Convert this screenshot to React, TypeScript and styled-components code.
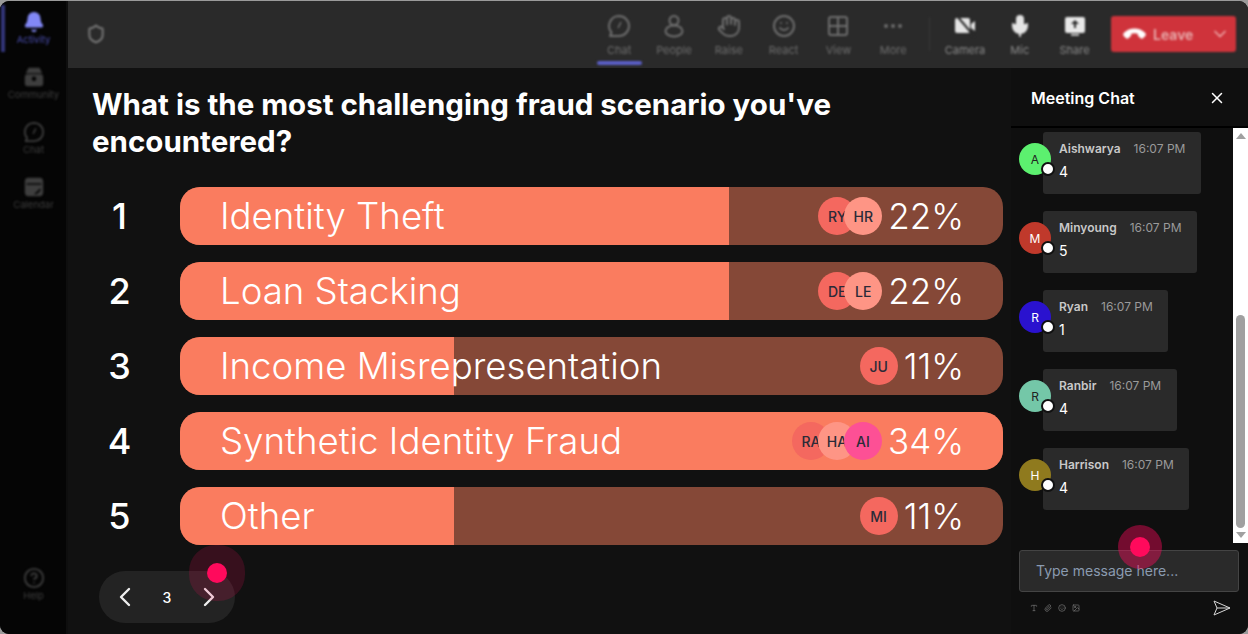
import styled, { createGlobalStyle } from "styled-components";
import {
  Shield,
  Hand,
  Smile,
  Grid2x2,
  Ellipsis,
  Mic,
  Phone,
  ChevronDown,
  ChevronLeft,
  ChevronRight,
  Bell,
  CircleHelp,
  X,
  Type,
  Paperclip,
  Image,
} from "lucide-react";

const GlobalStyle = createGlobalStyle`
  html, body {
    margin: 0;
    padding: 0;
    background: #9a9a9a;
  }
  * {
    box-sizing: border-box;
  }
`;

const BubbleIcon = ({ size }: { size: number }) => (
  <svg width={size} height={size} viewBox="0 0 24 24" fill="none" stroke="currentColor" strokeWidth="2">
    <path d="M12 2a10 10 0 0 1 0 20H3l1.5-3.5A10 10 0 0 1 12 2Z" strokeLinejoin="round" />
    <path d="M14 8l-3 6" strokeWidth="1.5" />
  </svg>
);

const CommunityIcon = () => (
  <svg width="22" height="22" viewBox="0 0 24 24" fill="currentColor">
    <path d="M6 2h12l3 6H3Z" />
    <rect x="2" y="9" width="20" height="13" rx="3" />
    <circle cx="12" cy="14" r="2.5" fill="#050505" />
  </svg>
);

const CalendarIcon = () => (
  <svg width="22" height="22" viewBox="0 0 24 24" fill="currentColor">
    <rect x="2" y="2" width="20" height="20" rx="4" />
    <rect x="4" y="8" width="16" height="1.6" fill="#050505" />
    <path d="M12 20l7-7v3l-4 4Z" fill="#050505" />
  </svg>
);

const PersonIcon = () => (
  <svg width="24" height="24" viewBox="0 0 24 24" fill="none" stroke="currentColor" strokeWidth="2">
    <circle cx="12" cy="6.5" r="4.5" />
    <ellipse cx="12" cy="17" rx="8.5" ry="5.5" />
  </svg>
);

const CameraIcon = () => (
  <svg width="24" height="24" viewBox="0 0 24 24" fill="#e4e4e4">
    <rect x="2" y="4" width="15" height="15" rx="2" />
    <path d="M18 10l4-3v10l-4-3Z" />
    <path d="M4 2l17 20" stroke="#2a2a2a" strokeWidth="2" />
  </svg>
);

const ShareIcon = () => (
  <svg width="24" height="24" viewBox="0 0 24 24" fill="#e8e8e8">
    <rect x="2" y="3" width="20" height="16" rx="2" />
    <path d="M12 6l4 4h-3v4h-2v-4H8Z" fill="#2a2a2a" />
    <rect x="8" y="20" width="8" height="1.6" />
  </svg>
);

const SendIcon = () => (
  <svg width="18" height="16" viewBox="0 0 18 16" fill="none" stroke="#d8d8d8" strokeWidth="1">
    <path d="M1 1l16 7-16 7 3-7Z" strokeLinejoin="round" />
    <path d="M4 8h13" />
  </svg>
);

const railItems = [
  { label: "Activity", icon: <Bell size={22} fill="#8288f5" color="#8288f5" />, active: true },
  { label: "Community", icon: <CommunityIcon /> },
  { label: "Chat", icon: <BubbleIcon size={22} /> },
  { label: "Calendar", icon: <CalendarIcon /> },
];

const tools = [
  { label: "Chat", icon: <BubbleIcon size={24} />, active: true },
  { label: "People", icon: <PersonIcon /> },
  { label: "Raise", icon: <Hand size={24} strokeWidth={2} /> },
  { label: "React", icon: <Smile size={24} strokeWidth={2} /> },
  { label: "View", icon: <Grid2x2 size={24} strokeWidth={2} /> },
  { label: "More", icon: <Ellipsis size={24} strokeWidth={2} /> },
];

const mediaTools = [
  { label: "Camera", icon: <CameraIcon /> },
  { label: "Mic", icon: <Mic size={24} fill="#e4e4e4" color="#e4e4e4" /> },
  { label: "Share", icon: <ShareIcon /> },
];

const pollOptions = [
  { rank: 1, label: "Identity Theft", fill: 66.7, percent: "22%", voters: ["RY", "HR"] },
  { rank: 2, label: "Loan Stacking", fill: 66.7, percent: "22%", voters: ["DE", "LE"] },
  { rank: 3, label: "Income Misrepresentation", fill: 33.3, percent: "11%", voters: ["JU"] },
  { rank: 4, label: "Synthetic Identity Fraud", fill: 100, percent: "34%", voters: ["RA", "HA", "AI"] },
  { rank: 5, label: "Other", fill: 33.3, percent: "11%", voters: ["MI"] },
];

const voterColors = ["#f4685f", "#fe9585", "#fd5095"];

const messages = [
  { name: "Aishwarya", text: "4", color: "#5cf06f", textColor: "#222", width: 158 },
  { name: "Minyoung", text: "5", color: "#c0392b", textColor: "#fff", width: 154 },
  { name: "Ryan", text: "1", color: "#2a12cf", textColor: "#fff", width: 125 },
  { name: "Ranbir", text: "4", color: "#74c7a8", textColor: "#222", width: 134 },
  { name: "Harrison", text: "4", color: "#8f7a1e", textColor: "#fff", width: 146 },
];

export default function App() {
  return (
    <>
      <GlobalStyle />
      <Frame>
        <Rail>
          <RailTop>
            {railItems.map((item) => (
              <RailItem key={item.label} $active={item.active}>
                {item.icon}
                <span>{item.label}</span>
              </RailItem>
            ))}
          </RailTop>
          <RailItem>
            <CircleHelp size={22} />
            <span>Help</span>
          </RailItem>
        </Rail>

        <Workspace>
          <Header>
            <ShieldIcon>
              <Shield size={20} strokeWidth={2.4} />
            </ShieldIcon>
            <Toolbar>
              {tools.map((tool) => (
                <Tool key={tool.label} $active={tool.active}>
                  {tool.icon}
                  <span>{tool.label}</span>
                </Tool>
              ))}
              <Divider />
              {mediaTools.map((tool) => (
                <MediaTool key={tool.label}>
                  {tool.icon}
                  <span>{tool.label}</span>
                </MediaTool>
              ))}
              <LeaveButton>
                <HangUp>
                  <Phone size={19} fill="#fff" color="#fff" />
                </HangUp>
                <LeaveLabel>Leave</LeaveLabel>
                <ChevronDown size={20} color="#eaa" />
              </LeaveButton>
            </Toolbar>
          </Header>

          <Body>
            <PollArea>
              <Question>
                What is the most challenging fraud scenario you've encountered?
              </Question>
              <OptionList>
                {pollOptions.map((option) => (
                  <OptionRow key={option.rank}>
                    <Rank>{option.rank}</Rank>
                    <Bar>
                      <BarFill style={{ width: `${option.fill}%` }} />
                      <BarLabel>{option.label}</BarLabel>
                      <BarResult>
                        <Voters>
                          {option.voters.map((voter, i) => (
                            <Voter key={voter} $color={voterColors[i]}>
                              {voter}
                            </Voter>
                          ))}
                        </Voters>
                        <Percent>{option.percent}</Percent>
                      </BarResult>
                    </Bar>
                  </OptionRow>
                ))}
              </OptionList>
              <Pager>
                <ChevronLeft size={32} color="#eee" strokeWidth={1.8} />
                <PageNumber>3</PageNumber>
                <ChevronRight size={32} color="#eee" strokeWidth={1.8} />
              </Pager>
              <PointerDot $x={139} $y={495} $halo={28} $alpha={0.16} />
            </PollArea>

            <ChatPanel>
              <ChatHeader>
                <ChatTitle>Meeting Chat</ChatTitle>
                <X size={18} color="#fff" />
              </ChatHeader>
              <ChatScroll>
                <MessageList>
                  {messages.map((message) => (
                    <MessageRow key={message.name}>
                      <Avatar $color={message.color} $textColor={message.textColor}>
                        {message.name[0]}
                        <StatusDot />
                      </Avatar>
                      <MessageCard style={{ width: message.width }}>
                        <MessageMeta>
                          <SenderName>{message.name}</SenderName>
                          <SentAt>16:07 PM</SentAt>
                        </MessageMeta>
                        <MessageText>{message.text}</MessageText>
                      </MessageCard>
                    </MessageRow>
                  ))}
                </MessageList>
                <Scrollbar>
                  <ArrowUp />
                  <ThumbTrack>
                    <Thumb />
                  </ThumbTrack>
                  <ArrowDown />
                </Scrollbar>
              </ChatScroll>
              <Composer>
                <MessageInput>Type message here...</MessageInput>
                <ComposerTools>
                  <FormatIcons>
                    <Type size={8} />
                    <Paperclip size={8} />
                    <Smile size={8} />
                    <Image size={8} />
                  </FormatIcons>
                  <SendIcon />
                </ComposerTools>
              </Composer>
              <PointerDot $x={119} $y={469} $halo={22} $alpha={0.42} />
            </ChatPanel>
          </Body>
        </Workspace>
      </Frame>
    </>
  );
}

const Frame = styled.div`
  display: flex;
  width: 1248px;
  height: 633px;
  margin-top: 1px;
  background: #0e0e0e;
  border-radius: 9px;
  overflow: hidden;
  font-family: Inter, "Liberation Sans", sans-serif;
`;

const Rail = styled.aside`
  flex: 0 0 66px;
  display: flex;
  flex-direction: column;
  justify-content: space-between;
  padding: 10px 0 12px 1px;
  background: #050505;
  color: #3e3e3e;
`;

const RailTop = styled.div`
  display: flex;
  flex-direction: column;
`;

const RailItem = styled.div<{ $active?: boolean }>`
  position: relative;
  display: flex;
  flex-direction: column;
  align-items: center;
  height: 55px;
  gap: 1px;
  font-size: 9.5px;
  color: ${(p) => (p.$active ? "#4a4eb0" : "#3e3e3e")};
  filter: blur(1.3px);

  &::before {
    content: "";
    display: ${(p) => (p.$active ? "block" : "none")};
    position: absolute;
    left: 0;
    top: -6px;
    width: 4px;
    height: 47px;
    background: #33367a;
  }
`;

const Workspace = styled.div`
  flex: 1;
  min-width: 0;
  display: flex;
  flex-direction: column;
  margin-left: 2px;
`;

const Header = styled.header`
  flex: 0 0 67px;
  display: flex;
  align-items: flex-start;
  justify-content: space-between;
  padding: 0 12px 0 18px;
  background: #2a2a2a;
`;

const ShieldIcon = styled.div`
  margin-top: 23px;
  color: #777;
  filter: blur(0.8px);
`;

const Toolbar = styled.div`
  display: flex;
  align-items: flex-start;
`;

const Tool = styled.div<{ $active?: boolean }>`
  position: relative;
  display: flex;
  flex-direction: column;
  align-items: center;
  width: 54.8px;
  padding-top: 13px;
  gap: 5px;
  font-size: 11px;
  color: #6e6e6e;
  filter: blur(1.3px);

  &::after {
    content: "";
    display: ${(p) => (p.$active ? "block" : "none")};
    position: absolute;
    left: 5px;
    top: 60px;
    width: 45px;
    height: 4px;
    border-radius: 2px;
    background: #5b5fc7;
  }
`;

const Divider = styled.div`
  width: 1px;
  height: 34px;
  margin: 16px 8px 0 8px;
  background: #3a3a3a;
  filter: blur(0.8px);
`;

const MediaTool = styled(Tool)`
  color: #8a8a8a;
`;

const LeaveButton = styled.div`
  display: flex;
  align-items: center;
  width: 125px;
  height: 36px;
  margin: 15px 0 0 9px;
  padding: 0 6px 0 14px;
  border-radius: 3px;
  background: #cf333b;
  color: #e8b0b0;
  filter: blur(1.2px);
`;

const HangUp = styled.span`
  display: flex;
  transform: rotate(135deg);
  margin-right: 9px;
`;

const LeaveLabel = styled.span`
  flex: 1;
  font-size: 14px;
  font-weight: 600;
`;

const Body = styled.div`
  flex: 1;
  min-height: 0;
  display: flex;
`;

const PollArea = styled.main`
  position: relative;
  flex: 1;
  min-width: 0;
  padding: 18px 8px 0 24px;
  background: #111;
`;

const Question = styled.h1`
  width: 770px;
  margin: 0 0 28px;
  font-size: 29.5px;
  font-weight: 700;
  line-height: 36.5px;
  color: #fff;
`;

const OptionList = styled.div`
  display: flex;
  flex-direction: column;
  gap: 17px;
`;

const OptionRow = styled.div`
  display: flex;
  align-items: center;
`;

const Rank = styled.div`
  flex: 0 0 88px;
  padding-right: 33px;
  text-align: center;
  font-size: 36px;
  font-weight: 500;
  color: #fff;
`;

const Bar = styled.div`
  position: relative;
  flex: 1;
  display: flex;
  align-items: center;
  justify-content: space-between;
  height: 58px;
  padding: 0 39px 0 40px;
  border-radius: 20px;
  overflow: hidden;
  background: #854837;
  color: #fff;
`;

const BarFill = styled.div`
  position: absolute;
  left: 0;
  top: 0;
  bottom: 0;
  background: #fa7c5f;
`;

const BarLabel = styled.span`
  position: relative;
  font-size: 36.6px;
  font-weight: 350;
`;

const BarResult = styled.div`
  position: relative;
  display: flex;
  align-items: center;
  gap: 6px;
`;

const Voters = styled.div`
  display: flex;
`;

const Voter = styled.div<{ $color: string }>`
  display: flex;
  align-items: center;
  justify-content: center;
  width: 38px;
  height: 38px;
  margin-left: -12px;
  border-radius: 50%;
  background: ${(p) => p.$color};
  color: #2b2b38;
  font-size: 14px;
  font-weight: 500;
`;

const Percent = styled.span`
  font-size: 35px;
  font-weight: 350;
`;

const Pager = styled.div`
  display: flex;
  align-items: center;
  justify-content: space-between;
  width: 136px;
  height: 52px;
  margin: 26px 0 0 7px;
  padding: 0 10px;
  border-radius: 26px;
  background: #232323;
`;

const PageNumber = styled.span`
  font-size: 14px;
  font-weight: 500;
  color: #fff;
`;

const PointerDot = styled.div<{ $x: number; $y: number; $halo: number; $alpha: number }>`
  position: absolute;
  left: ${(p) => p.$x}px;
  top: ${(p) => p.$y}px;
  width: 20px;
  height: 20px;
  border-radius: 50%;
  background: #ff0a5c;
  box-shadow: 0 0 0 ${(p) => p.$halo - 10}px rgba(255, 10, 92, ${(p) => p.$alpha});
`;

const ChatPanel = styled.section`
  position: relative;
  flex: 0 0 237px;
  display: flex;
  flex-direction: column;
  background: #0f0f0f;
`;

const ChatHeader = styled.div`
  flex: 0 0 60px;
  display: flex;
  align-items: center;
  justify-content: space-between;
  padding: 2px 22px 0 20px;
  border-bottom: 2px solid #000;
`;

const ChatTitle = styled.h2`
  margin: 0;
  font-size: 16px;
  font-weight: 600;
  color: #fff;
`;

const ChatScroll = styled.div`
  flex: 0 0 415px;
  display: flex;
  justify-content: space-between;
`;

const MessageList = styled.div`
  display: flex;
  flex-direction: column;
  gap: 17px;
  padding: 4px 0 0 8px;
`;

const MessageRow = styled.div`
  display: flex;
  align-items: flex-start;
`;

const Avatar = styled.div<{ $color: string; $textColor: string }>`
  position: relative;
  z-index: 1;
  flex: 0 0 32px;
  display: flex;
  align-items: center;
  justify-content: center;
  width: 32px;
  height: 32px;
  margin: 11px -8px 0 0;
  border-radius: 50%;
  background: ${(p) => p.$color};
  color: ${(p) => p.$textColor};
  font-size: 12px;
`;

const StatusDot = styled.span`
  position: absolute;
  right: -4px;
  bottom: -1px;
  width: 14px;
  height: 14px;
  border: 2px solid #111;
  border-radius: 50%;
  background: #fff;
`;

const MessageCard = styled.div`
  height: 62px;
  padding: 9px 8px 0 16px;
  border-radius: 3px;
  background: #2a2a2a;
`;

const MessageMeta = styled.div`
  display: flex;
  align-items: baseline;
  gap: 13px;
`;

const SenderName = styled.span`
  font-size: 12px;
  font-weight: 600;
  color: #c8c8c8;
`;

const SentAt = styled.span`
  font-size: 12px;
  color: #9a9a9a;
`;

const MessageText = styled.div`
  margin-top: 7px;
  font-size: 14px;
  color: #fff;
`;

const Scrollbar = styled.div`
  flex: 0 0 15px;
  display: flex;
  flex-direction: column;
  align-items: center;
  background: #fff;
`;

const ArrowUp = styled.div`
  flex: none;
  width: 0;
  height: 0;
  margin: 5px 0 3px;
  border: 5px solid transparent;
  border-top: 0;
  border-bottom: 6px solid #a0a0a0;
`;

const ThumbTrack = styled.div`
  flex: 1;
  display: flex;
  align-items: flex-end;
  margin-bottom: 4px;
`;

const Thumb = styled.div`
  width: 9px;
  height: 213px;
  border-radius: 5px;
  background: #a0a0a0;
`;

const ArrowDown = styled.div`
  flex: none;
  width: 0;
  height: 0;
  margin-bottom: 5px;
  border: 5px solid transparent;
  border-bottom: 0;
  border-top: 6px solid #a0a0a0;
`;

const Composer = styled.div`
  padding: 7px 9px 0 8px;
`;

const MessageInput = styled.div`
  display: flex;
  align-items: center;
  height: 42px;
  padding: 0 0 2px 16px;
  border: 1px solid #444;
  border-radius: 3px;
  background: #2a2a2a;
  font-size: 14px;
  color: #8a9bb0;
`;

const ComposerTools = styled.div`
  display: flex;
  align-items: center;
  justify-content: space-between;
  margin-top: 8px;
  padding: 0 8px 0 11px;
`;

const FormatIcons = styled.div`
  display: flex;
  gap: 6px;
  color: #777;
`;
